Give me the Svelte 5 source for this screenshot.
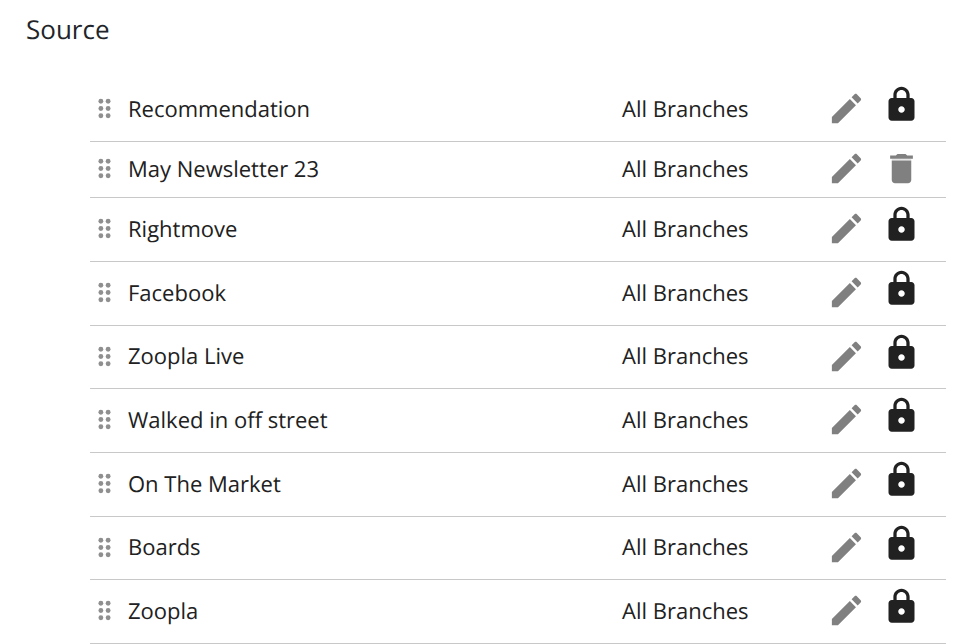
<script>
  let sources = [
    { name: 'Recommendation', branch: 'All Branches', locked: true },
    { name: 'May Newsletter 23', branch: 'All Branches', locked: false },
    { name: 'Rightmove', branch: 'All Branches', locked: true },
    { name: 'Facebook', branch: 'All Branches', locked: true },
    { name: 'Zoopla Live', branch: 'All Branches', locked: true },
    { name: 'Walked in off street', branch: 'All Branches', locked: true },
    { name: 'On The Market', branch: 'All Branches', locked: true },
    { name: 'Boards', branch: 'All Branches', locked: true },
    { name: 'Zoopla', branch: 'All Branches', locked: true }
  ];

  function removeSource(name) {
    sources = sources.filter(source => source.name !== name);
  }
</script>

<main>
  <h1>Source</h1>
  <ul>
    {#each sources as source (source.name)}
      <li class:locked={source.locked}>
        <button class="handle" aria-label="Move {source.name}">
          <svg viewBox="0 0 24 24">
            <circle cx="9" cy="6" r="2" /><circle cx="15" cy="6" r="2" />
            <circle cx="9" cy="12" r="2" /><circle cx="15" cy="12" r="2" />
            <circle cx="9" cy="18" r="2" /><circle cx="15" cy="18" r="2" />
          </svg>
        </button>
        <span class="name">{source.name}</span>
        <span class="branch">{source.branch}</span>
        <div class="actions">
          <button class="icon" aria-label="Edit {source.name}">
            <svg viewBox="0 0 24 24">
              <path d="M3 17.25V21h3.75L17.81 9.94l-3.75-3.75L3 17.25zM20.71 7.04c.39-.39.39-1.02 0-1.41l-2.34-2.34c-.39-.39-1.02-.39-1.41 0l-1.83 1.83 3.75 3.75 1.83-1.83z" />
            </svg>
          </button>
          {#if source.locked}
            <span class="icon lock">
              <svg viewBox="0 0 24 24" role="img" aria-label="Locked">
                <path d="M18 8h-1V6c0-2.76-2.24-5-5-5S7 3.24 7 6v2H6c-1.1 0-2 .9-2 2v10c0 1.1.9 2 2 2h12c1.1 0 2-.9 2-2V10c0-1.1-.9-2-2-2zm-6 9c-1.1 0-2-.9-2-2s.9-2 2-2 2 .9 2 2-.9 2-2 2zm3-9H9V6c0-1.66 1.34-3 3-3s3 1.34 3 3v2z" />
              </svg>
            </span>
          {:else}
            <button class="icon" aria-label="Delete {source.name}" on:click={() => removeSource(source.name)}>
              <svg viewBox="0 0 24 24">
                <path class="gap" d="M6 6h12v1H6z" />
                <path d="M6 19c0 1.1.9 2 2 2h8c1.1 0 2-.9 2-2V7H6v12zM19 4h-3.5l-1-1h-5l-1 1H5v2h14V4z" />
              </svg>
            </button>
          {/if}
        </div>
      </li>
    {/each}
  </ul>
</main>

<style>
  :global(body) {
    background: #fff;
  }

  main {
    padding: 11px 14px 0 26px;
    font-family: "Open Sans", "Noto Sans", sans-serif;
    text-rendering: geometricPrecision;
    color: #212121;
  }

  h1 {
    margin: 0;
    font-size: 26px;
    line-height: 36px;
    font-weight: 400;
    color: #212529;
  }

  ul {
    list-style: none;
    margin: 31px 0 0 64px;
    padding: 0;
  }

  li {
    box-sizing: border-box;
    display: grid;
    grid-template-columns: 29px 1fr 205px 94px;
    align-items: center;
    height: 56px;
    padding: 0 25px 2px 0;
    border-bottom: 1px solid #c8c8c8;
    font-size: 22px;
    line-height: 30px;
  }

  li.locked {
    height: 64px;
  }

  li.locked:nth-child(3n + 2) {
    height: 63px;
  }

  button {
    display: block;
    padding: 0;
    border: none;
    background: none;
    cursor: pointer;
  }

  svg {
    display: block;
    width: 100%;
    fill: #808080;
  }

  .handle {
    width: 29px;
    cursor: grab;
  }

  .handle svg {
    fill: #8f8f8f;
  }

  .name {
    padding-left: 9px;
  }

  .actions {
    display: flex;
    align-items: center;
    justify-content: space-between;
    height: 39px;
  }

  .icon {
    width: 39px;
  }

  .lock {
    margin-bottom: 8px;
  }

  .lock svg {
    fill: #212121;
  }

  .gap {
    fill: #e6e6e6;
  }
</style>
